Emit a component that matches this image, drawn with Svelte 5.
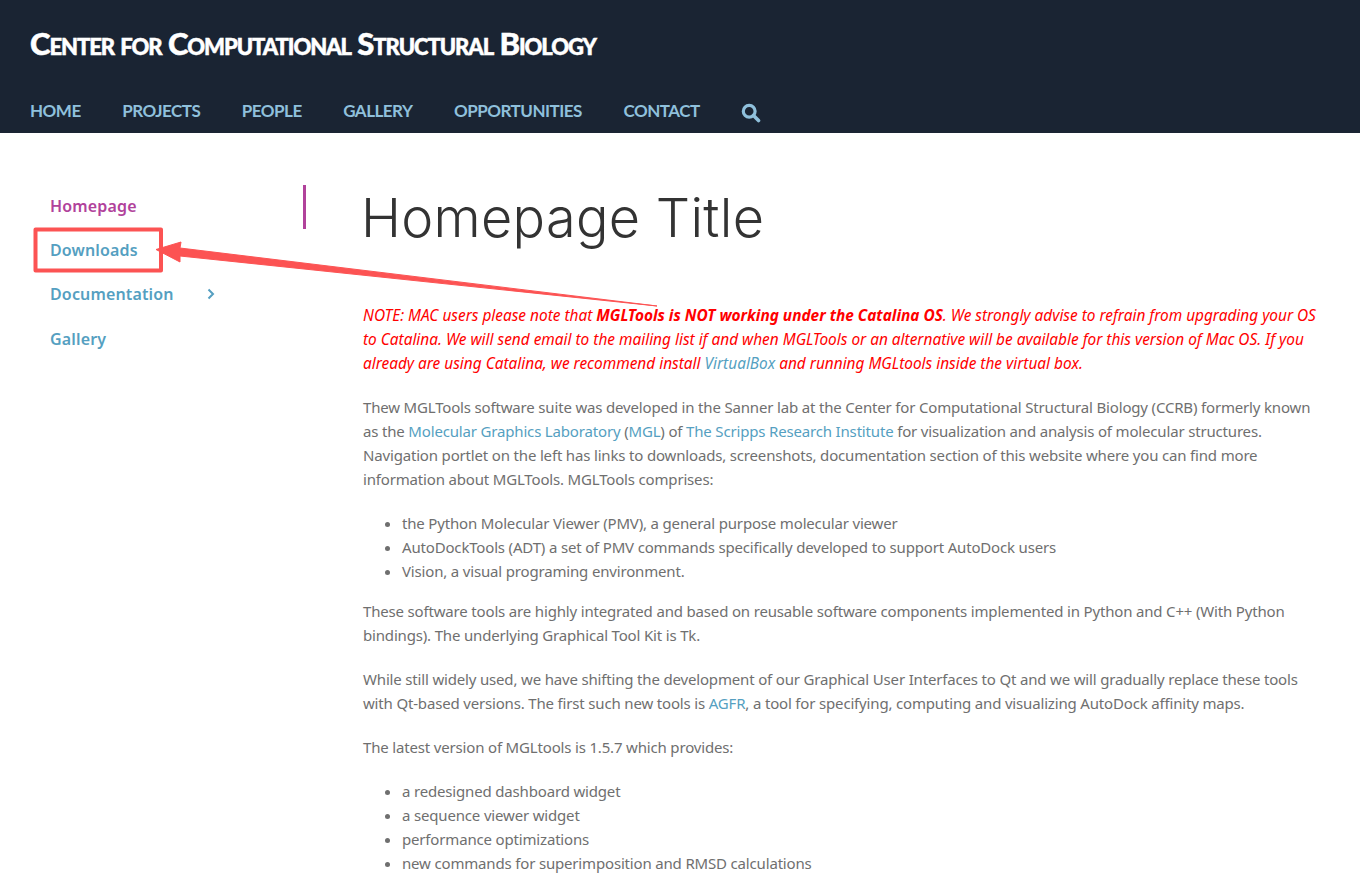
<script>
	const navItems = ['Home', 'Projects', 'People', 'Gallery', 'Opportunities', 'Contact'];
	const sideItems = [
		{ label: 'Homepage', active: true },
		{ label: 'Downloads' },
		{ label: 'Documentation', more: true },
		{ label: 'Gallery' }
	];
</script>

<header class="site-header">
	<div class="site-title">Center for Computational Structural Biology</div>
	<nav class="main-nav">
		{#each navItems as item}
			<a href="#top">{item}</a>
		{/each}
		<svg class="search" viewBox="0 0 20 20" width="20" height="20" aria-hidden="true">
			<circle cx="8.2" cy="8.2" r="5.9" fill="none" stroke="currentColor" stroke-width="3.2" />
			<path d="M12.5 12.5l5 5" fill="none" stroke="currentColor" stroke-width="3.6" stroke-linecap="round" />
		</svg>
	</nav>
</header>

<div class="page">
	<aside class="sidebar">
		<ul>
			{#each sideItems as item}
				<li class:active={item.active}>
					<a href="#top">{item.label}</a>
					{#if item.more}
						<svg class="chevron" viewBox="0 0 8 12" width="8" height="12" aria-hidden="true">
							<path d="M1.5 1.5L6 6l-4.500 4.500" fill="none" stroke="currentColor" stroke-width="2" />
						</svg>
					{/if}
				</li>
			{/each}
		</ul>
	</aside>

	<main class="content">
		<h1>Homepage Title</h1>

		<p class="note">
			NOTE: MAC users please note that <strong>MGLTools is NOT working under the Catalina OS</strong>. We strongly advise to refrain from upgrading your OS to Catalina. We will send email to the mailing list if and when MGLTools or an alternative will be available for this version of Mac OS. If you already are using Catalina, we recommend install <a href="#top">VirtualBox</a> and running MGLtools inside the virtual box.
		</p>

		<p>
			Thew MGLTools software suite was developed in the Sanner lab at the Center for Computational Structural Biology (CCRB) formerly known as the <a href="#top">Molecular Graphics Laboratory</a> (<a href="#top">MGL</a>) of <a href="#top">The Scripps Research Institute</a> for visualization and analysis of molecular structures. Navigation portlet on the left has links to downloads, screenshots, documentation section of this website where you can find more information about MGLTools. MGLTools comprises:
		</p>

		<ul>
			<li>the Python Molecular Viewer (PMV), a general purpose molecular viewer</li>
			<li>AutoDockTools (ADT) a set of PMV commands specifically developed to support AutoDock users</li>
			<li>Vision, a visual programing environment.</li>
		</ul>

		<p>
			These software tools are highly integrated and based on reusable software components implemented in Python and C++ (With Python bindings). The underlying Graphical Tool Kit is Tk.
		</p>

		<p>
			While still widely used, we have shifting the development of our Graphical User Interfaces to Qt and we will gradually replace these tools with Qt-based versions. The first such new tools is <a href="#top">AGFR</a>, a tool for specifying, computing and visualizing AutoDock affinity maps.
		</p>

		<p>The latest version of MGLtools is 1.5.7 which provides:</p>

		<ul>
			<li>a redesigned dashboard widget</li>
			<li>a sequence viewer widget</li>
			<li>performance optimizations</li>
			<li>new commands for superimposition and RMSD calculations</li>
		</ul>
	</main>
</div>

<!-- screenshot annotation lying over the page -->
<svg class="annotation" viewBox="0 0 1360 895" width="1360" height="895" aria-hidden="true">
	<rect x="35.500" y="229.500" width="125.500" height="41" fill="none" stroke="#fc5353" stroke-width="4" stroke-linejoin="round" />
	<path d="M156 249.500L181 242L180 248L657 306L180 256L180 262Z" fill="#fc5353" stroke="#fc5353" stroke-width="1" stroke-linejoin="round" />
</svg>

<style>
	:global(body) {
		margin: 0;
		background: #fff;
		overflow: hidden;
		font-family: 'Noto Sans', 'Liberation Sans', sans-serif;
		font-size: 15px;
		line-height: 24px;
		color: #6f6f6f;
	}

	a {
		text-decoration: none;
		color: #559fc1;
	}

	.site-header {
		height: 133px;
		box-sizing: border-box;
		padding: 25px 30px 0;
		background: #1a2433;
	}

	.site-title {
		font-family: 'Lato', sans-serif;
		font-variant: small-caps;
		font-weight: 900;
		font-size: 31px;
		line-height: 36px;
		letter-spacing: -1.05px;
		-webkit-text-stroke: 0.5px #fff;
		color: #fff;
	}

	.main-nav {
		display: flex;
		align-items: center;
		gap: 41.500px;
		margin-top: 33px;
	}

	.main-nav a {
		font-family: 'Lato', sans-serif;
		font-weight: 700;
		font-size: 17px;
		line-height: 34px;
		letter-spacing: -0.5px;
		text-transform: uppercase;
		color: #8fc0dc;
	}

	.search {
		color: #8fc0dc;
		margin-top: 4px;
	}

	.page {
		display: flex;
		padding-top: 52px;
	}

	.sidebar {
		width: 306px;
		flex: none;
	}

	.sidebar ul {
		list-style: none;
		margin: 0;
		padding: 0;
	}

	.sidebar li {
		display: flex;
		align-items: center;
		gap: 33px;
		height: 44.400px;
		box-sizing: border-box;
		padding-left: 50px;
		padding-bottom: 3px;
		border-right: 3px solid transparent;
		color: #559fc1;
	}

	.sidebar li a {
		font-size: 16px;
		font-weight: 600;
		letter-spacing: 0.15px;
		color: inherit;
	}

	.sidebar li.active {
		border-right-color: #b1429b;
		color: #b1429b;
	}

	.content {
		flex: 1;
		padding: 0 36px 0 57px;
		letter-spacing: -0.17px;
	}

	h1 {
		margin: 0 0 53px -2px;
		font-family: 'Inter', sans-serif;
		font-weight: 300;
		font-size: 54px;
		line-height: 66px;
		letter-spacing: 0.3px;
		color: #333;
	}

	p {
		margin: 0 0 20px;
	}

	.note {
		margin-bottom: 19px;
		color: #f00;
		font-style: italic;
		font-size: 15.400px;
		letter-spacing: 0;
	}

	.content ul {
		margin: 0 0 16px;
		padding-left: 39px;
	}

	.annotation {
		position: absolute;
		top: 0;
		left: 0;
		pointer-events: none;
	}
</style>
